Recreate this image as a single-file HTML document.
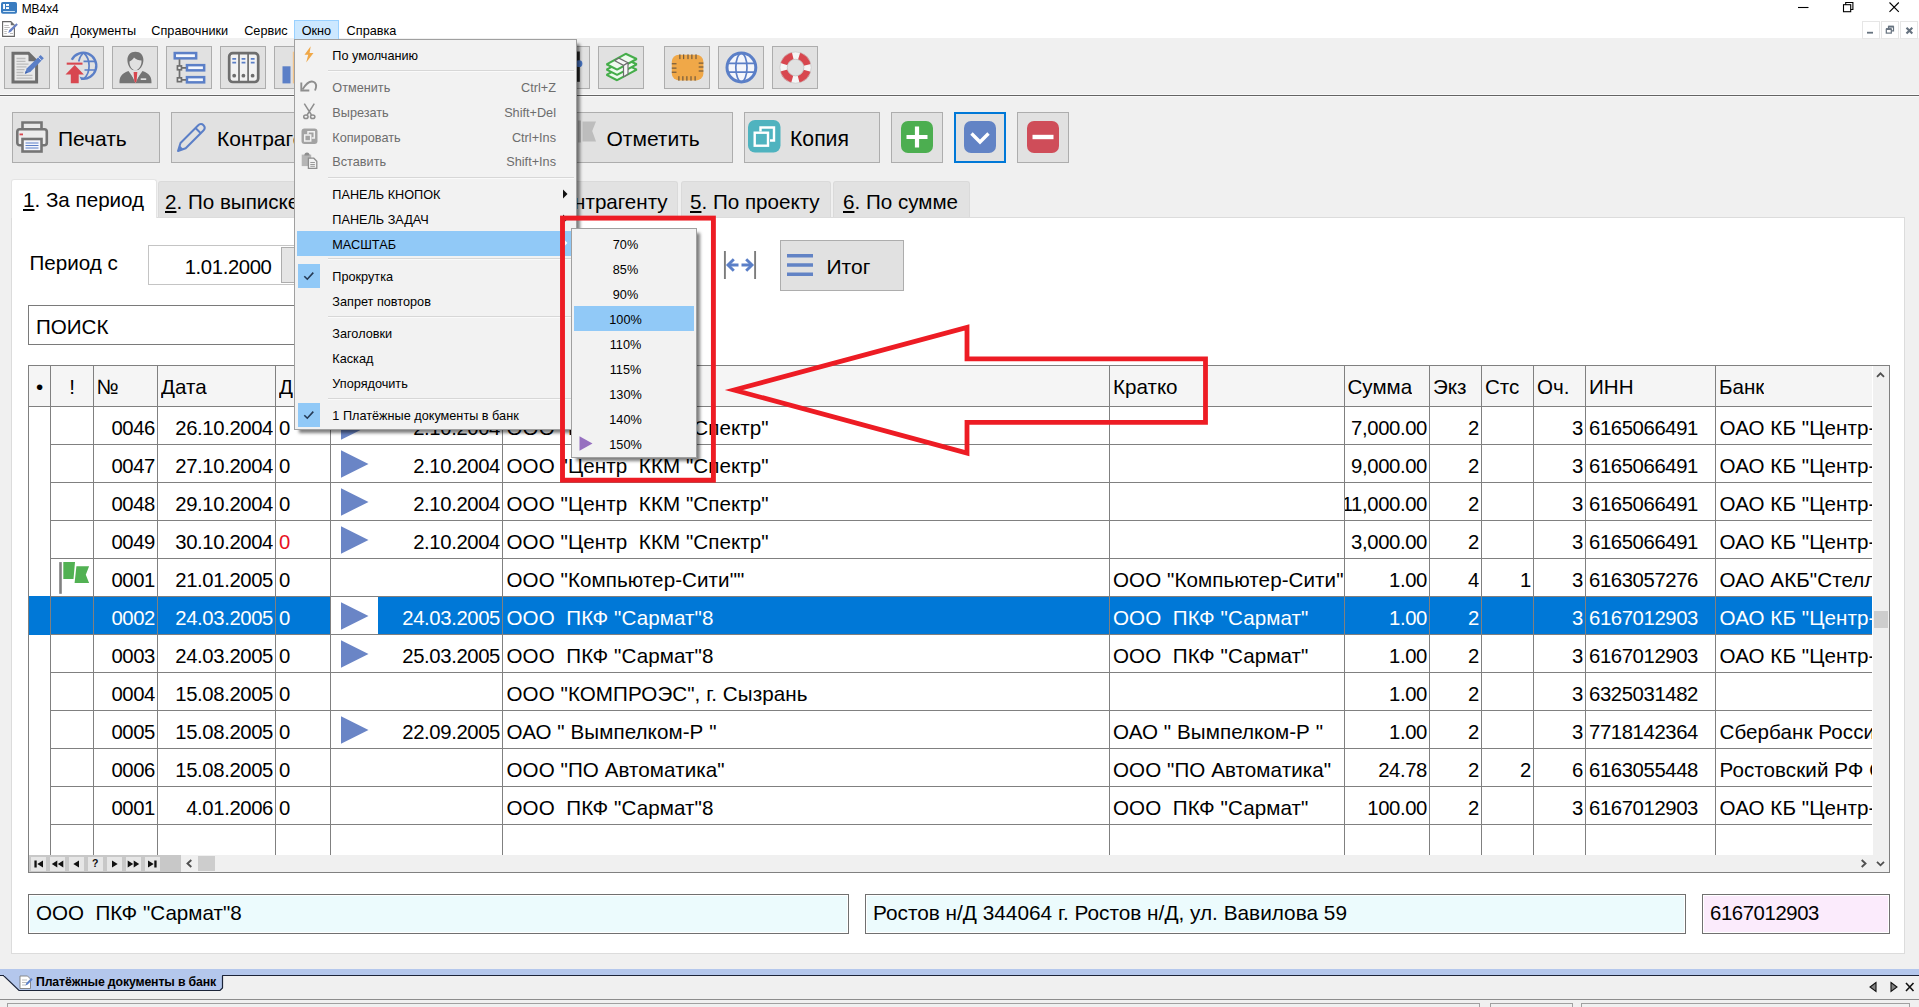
<!DOCTYPE html>
<html lang="ru"><head><meta charset="utf-8"><title>МВ4х4</title>
<style>
html,body{margin:0;padding:0;}
body{width:1919px;height:1007px;overflow:hidden;background:#f0f0f0;font-family:"Liberation Sans",sans-serif;color:#000;}
#app{position:relative;width:1919px;height:1007px;overflow:hidden;background:#f0f0f0;}
.abs{position:absolute;}
.t{position:absolute;white-space:pre;line-height:1;}
.titlebar{position:absolute;left:0;top:0;width:1919px;height:38px;background:#fff;}
.m12{font-size:12.7px;}
.tbtn{position:absolute;width:44px;height:41px;top:46px;background:#e1e1e1;border:1px solid #adadad;}
.tbtn svg{position:absolute;left:4.500px;top:3.600px;overflow:visible;}
.bbtn{position:absolute;top:112px;height:49px;background:#e1e1e1;border:1px solid #adadad;}
.big{font-size:20.6px;}
.tab{position:absolute;top:181px;height:36px;background:#e2e2e2;border:1px solid #dadada;border-bottom:none;box-sizing:border-box;border-radius:3px 3px 0 0;}
.tab.act{top:179px;height:39px;background:#fff;border-color:#e4e4e4;z-index:2;}
.panel{position:absolute;left:11px;top:217px;width:1892px;height:735px;background:#fff;border:1px solid #dcdcdc;}
.inp{position:absolute;background:#fff;border:1px solid #7a7a7a;box-sizing:border-box;}
.vl{position:absolute;width:1px;background:#808080;}
.hl{position:absolute;height:1px;background:#808080;}
.c{position:absolute;white-space:pre;line-height:38px;height:38px;overflow:hidden;font-size:20.6px;}
.tx{letter-spacing:0.07px;}
.n{font-size:20.300px;letter-spacing:-0.380px;}
.r{text-align:right;}
.sel{color:#fff;}
.menu{position:absolute;background:#f2f2f2;border:1px solid #a0a0a0;box-shadow:4px 4px 3px -1px rgba(0,0,0,0.5);box-sizing:border-box;}
.mi{position:absolute;left:37.300px;font-size:12.7px;white-space:pre;line-height:1;}
.dis{color:#6d6d6d;}
.sc{position:absolute;font-size:12.7px;white-space:pre;line-height:1;color:#6d6d6d;text-align:right;}
.msep{position:absolute;left:33px;right:2px;height:1px;background:#d7d7d7;border-bottom:1px solid #fafafa;}
.chk{position:absolute;left:3px;width:22px;height:24px;background:#91c9f7;}

</style></head>
<body>
<div id="app">
<div class="titlebar"></div>
<svg class="abs" style="left:1px;top:2px" width="17" height="13" viewBox="0 0 17 13"><rect x="0" y="0" width="16" height="11.800" rx="1.800" fill="#3a7cc0"/><rect x="2.100" y="2" width="1.900" height="5" fill="#fff"/><rect x="5" y="2" width="3" height="1.900" fill="#fff"/><rect x="5" y="5.100" width="3" height="1.900" fill="#fff"/><rect x="2.100" y="9" width="11.800" height="1" fill="#cfe6f8"/></svg>
<span class="t" style="left:21.700px;top:3.600px;font-size:11.900px">МВ4х4</span>
<svg class="abs" style="left:1790px;top:0" width="125" height="16" viewBox="0 0 125 16"><g stroke="#000" stroke-width="1.1" fill="none"><path d="M8 7.5h10.5"/><rect x="53.500" y="4.700" width="7.200" height="7"/><path d="M55.700 4.700v-2.200h7.200v7h-2.200"/><path d="M99.500 2.500l9.300 9.300M108.800 2.500l-9.300 9.300"/></g></svg>
<div class="abs" style="left:1862px;top:21px;width:16px;height:16px;background:#fff;border:1px solid #e6e6e6"></div>
<div class="abs" style="left:1881px;top:21px;width:16px;height:16px;background:#fff;border:1px solid #e6e6e6"></div>
<div class="abs" style="left:1900px;top:21px;width:16px;height:16px;background:#fff;border:1px solid #e6e6e6"></div>
<svg class="abs" style="left:1862px;top:21px" width="57" height="18" viewBox="0 0 57 18"><g fill="none" stroke="#66727f" stroke-width="1.5"><path d="M5 11.7h6" stroke-width="1.8"/><rect x="24.3" y="8.3" width="5" height="3.8" stroke-width="1.2"/><path d="M26.5 8v-2.2h5v4h-2" stroke-width="1.2"/><path d="M26.2 5.4h5.6" stroke-width="1.6"/><path d="M24 7.9h5.6" stroke-width="1.6"/><path d="M44.500 6.700l5.800 5.800M50.300 6.700l-5.800 5.800" stroke-width="2.100"/></g></svg>
<svg class="abs" style="left:2px;top:21px" width="17" height="17" viewBox="0 0 17 17"><path d="M0.600 0.600h8.200l3.600 3.600v11.200H0.600z" fill="#fff" stroke="#666" stroke-width="1.100"/><path d="M8.800 0.600v3.600h3.600z" fill="#707070"/><path d="M2.300 4.500h4.500M2.300 6.500h5.500M2.300 8.500h3.500M2.300 10.500h2.500M2.300 12.500h2.500M8 12.500h3" stroke="#b5b5b5" stroke-width="0.900"/><path d="M6.200 12l1-3 7.300-6.800 1.300 1.500-6.800 7z" fill="#6a82c4"/></svg>
<div class="abs" style="left:294px;top:20px;width:43px;height:19px;background:#cce8ff;border:1px solid #99d1ff;box-sizing:content-box;width:43px;height:18px"></div>
<span class="t m12" style="left:27.5px;top:24.700px">Файл</span>
<span class="t m12" style="left:70.8px;top:24.700px">Документы</span>
<span class="t m12" style="left:151.3px;top:24.700px">Справочники</span>
<span class="t m12" style="left:244.2px;top:24.700px">Сервис</span>
<span class="t m12" style="left:301.7px;top:24.700px">Окно</span>
<span class="t m12" style="left:346.6px;top:24.700px">Справка</span>
<div class="abs" style="left:0;top:94px;width:1919px;height:3px;background:#f9f9f9"></div>
<div class="abs" style="left:0;top:95px;width:1919px;height:1px;background:#646464"></div>
<div class="tbtn" style="left:4px"><svg width="34" height="34" viewBox="0 0 34 34"><path d="M3 2.200H18.500L26.600 10.300V30.900H3z" fill="#e9e9e9" stroke="#6e6e6e" stroke-width="3" stroke-linejoin="miter"/><path d="M18.500 1.500v8.800h8.800z" fill="#6e6e6e"/><path d="M6.500 7.500h9M6.500 10.300h9M6.500 13.100h12M6.500 15.900h10M6.500 18.700h8M6.500 21.500h7M6.500 24.300h16M6.500 27.100h16" stroke="#bcbcbc" stroke-width="1.300"/><path d="M14.900 22.700l1.700-5.300L30.600 4l3.200 3.300-13.500 13.700z" fill="#5b7fc7"/><path d="M28.300 6.200l3.300 3.300" stroke="#dfe7f7" stroke-width="0.900"/><path d="M14.900 22.700l.9-2.800 1.900 1.900z" fill="#3f61ab"/></svg></div>
<div class="tbtn" style="left:58px"><svg width="34" height="34" viewBox="0 0 34 34"><g fill="none" stroke="#5b7fc7"><path d="M7.800 8.700A13 13 0 1 1 17.270 27.640" stroke-width="2.400"/><path d="M19.300 2c-2.500 2.300-4 5.200-4.600 8.500" stroke-width="1.600"/><path d="M19.800 2c7 6 7 19.500 0.300 25.500" stroke-width="1.700"/><path d="M19.500 10.300h12M20.500 19h11.200" stroke-width="1.700"/></g><path d="M2.700 11.600h15.800v2.100H2.700z" fill="#d8474f"/><path d="M10.700 14.100L19.900 23.600H14.700V32.300H6.800V23.600H1.500z" fill="#d8474f"/><path d="M15.500 25.500l3.800 1.600-2 2.200z" fill="#5b7fc7"/></svg></div>
<div class="tbtn" style="left:112px"><svg width="34" height="34" viewBox="0 0 34 34"><path d="M17.400 0.700c5 0 8 3.400 8 8.200 0 5.500-3.500 10.800-8 10.800s-8-5.300-8-10.800c0-4.800 3-8.200 8-8.200z" fill="#747474"/><path d="M11.500 10.500c2-1 3.500-2.300 4.500-4 2 2 4.500 3 7.500 3 .3 4.500-2.500 9.700-6.100 9.700s-6.200-4.500-5.900-8.700z" fill="#e1e1e1"/><path d="M1.500 32.300c-.3-6 1.500-9.500 9-12.300l7 10 7-10c7.500 2.800 9.300 6.300 9 12.300z" fill="#747474"/><path d="M11.800 19.300l5.700 13 5.700-13z" fill="#e1e1e1"/><path d="M15.600 20.900h3.700l-.7 9-1.100 2-1.200-2z" fill="#d8474f"/><rect x="22.700" y="27.300" width="5.500" height="1.700" fill="#e1e1e1"/></svg></div>
<div class="tbtn" style="left:166px"><svg width="34" height="34" viewBox="0 0 34 34"><g fill="#f4f7fd" stroke="#5b7fc7" stroke-width="2.500"><rect x="2.750" y="2.050" width="21.400" height="5.300"/><rect x="14.950" y="14.150" width="17.200" height="5.200"/><rect x="14.950" y="26.150" width="17.200" height="5.200"/></g><path d="M7.500 8.300v18M10 16.800h4M10 28.800h4" stroke="#6e6e6e" stroke-width="1.700" fill="none"/><rect x="5.450" y="14.950" width="4" height="3.800" fill="#f2f2f2" stroke="#6e6e6e" stroke-width="1.700"/><rect x="5.450" y="26.850" width="4" height="3.800" fill="#f2f2f2" stroke="#6e6e6e" stroke-width="1.700"/></svg></div>
<div class="tbtn" style="left:220px"><svg width="34" height="34" viewBox="0 0 34 34"><rect x="3.200" y="2.100" width="29" height="28.900" rx="3.500" fill="#f2f2f2" stroke="#6e6e6e" stroke-width="2.700"/><path d="M13 2v29M22.100 2v29" stroke="#6e6e6e" stroke-width="1.700"/><g stroke="#5b7fc7" stroke-width="1.700"><path d="M6.300 7.800h3.800M6.300 11.700h3.800M15.600 7.800h3.800M15.600 11.700h3.800M24.800 7.800h3.800M24.800 11.700h3.800"/></g><g fill="#6e6e6e"><circle cx="8.200" cy="24.700" r="1.900"/><circle cx="17.400" cy="24.700" r="1.900"/><circle cx="26.600" cy="24.700" r="1.900"/></g></svg></div>
<div class="tbtn" style="left:274px"><svg width="34" height="34" viewBox="0 0 34 34"><rect x="2.500" y="15.300" width="8" height="17.100" fill="#5b7fc7"/><rect x="12.800" y="0.700" width="8" height="31.700" fill="#f3c48a"/><rect x="23" y="9" width="8" height="23.400" fill="#d8474f"/></svg></div>
<div class="tbtn" style="left:328px"><svg width="34" height="34" viewBox="0 0 34 34"></svg></div>
<div class="tbtn" style="left:382px"><svg width="34" height="34" viewBox="0 0 34 34"></svg></div>
<div class="tbtn" style="left:436px"><svg width="34" height="34" viewBox="0 0 34 34"></svg></div>
<div class="tbtn" style="left:490px"><svg width="34" height="34" viewBox="0 0 34 34"></svg></div>
<div class="tbtn" style="left:544px"><svg width="34" height="34" viewBox="0 0 34 34"><rect x="26.800" y="0.500" width="3" height="30.300" fill="#2a2a2a"/><circle cx="29" cy="12.700" r="3.400" fill="#4a78c8"/></svg></div>
<div class="tbtn" style="left:598px"><svg width="34" height="34" viewBox="0 0 34 34"><g stroke="#45ad4a" stroke-width="2.100" stroke-linejoin="bevel" fill="#eefaee"><path d="M2.600 23.9L21.700 13.4L32.700 18.6L13.100 29.2z"/><path d="M2.600 18.6L21.700 8.1L32.700 13.3L13.100 23.9z"/><path d="M2.600 13.3L21.700 2.8L32.700 8.0L13.100 18.6z"/></g><path d="M10.800 9.800L14.900 7.100L24 11.700L19.500 14.400z" fill="#f6f6f6" stroke="#6e6e6e" stroke-width="1.200" stroke-linejoin="round"/><path d="M19.500 14.400L24 11.700V23.100L19.500 25.800z" fill="#f6f6f6" stroke="#6e6e6e" stroke-width="1.200" stroke-linejoin="round"/></svg></div>
<div class="tbtn" style="left:664px"><svg width="34" height="34" viewBox="0 0 34 34"><rect x="1.800" y="3.800" width="31.600" height="25.600" rx="7" fill="#f0a848"/><g stroke="#5a4a3a" stroke-width="1"><path d="M9.900 3.400v4.700M13.700 3.400v4.700M18 3.400v4.700M21.900 3.400v4.700M26 3.400v4.700M8.900 25.200v4.500M12.900 25.200v4.500M16.900 25.200v4.500M21 25.200v4.500M25.100 25.200v4.500M1.800 12.800h4.700M1.800 17.100h4.700M1.800 21.200h4.700M28.700 12.100h4.700M28.700 16h4.700M28.700 20h4.700"/></g></svg></div>
<div class="tbtn" style="left:718px"><svg width="34" height="34" viewBox="0 0 34 34"><circle cx="17.400" cy="16.500" r="14.400" fill="#f4f6fb" stroke="#5b7fc7" stroke-width="3"/><g fill="none" stroke="#5b7fc7" stroke-width="1.700"><ellipse cx="17.400" cy="16.500" rx="5.600" ry="14.200"/><path d="M3.500 12.300h27.800M3.500 21.200h27.800"/></g></svg></div>
<div class="tbtn" style="left:772px"><svg width="34" height="34" viewBox="0 0 34 34"><circle cx="17.550" cy="16.550" r="12" fill="none" stroke="#f5f5f5" stroke-width="7.500"/><circle cx="17.550" cy="16.550" r="12" fill="none" stroke="#d8474f" stroke-width="7.500" stroke-dasharray="12.360 6.490" stroke-dashoffset="15.600"/><circle cx="17.550" cy="16.550" r="15.700" fill="none" stroke="#c4c4c4" stroke-width="0.700"/><circle cx="17.550" cy="16.550" r="8.300" fill="none" stroke="#c4c4c4" stroke-width="0.900"/></svg></div>
<div class="bbtn" style="left:12px;width:146px;"></div>
<div class="bbtn" style="left:171px;width:198px;"></div>
<div class="bbtn" style="left:382px;width:180px;"></div>
<div class="bbtn" style="left:575px;width:156px;"></div>
<div class="bbtn" style="left:744px;width:134px;"></div>
<div class="bbtn" style="left:891px;width:50px;"></div>
<div class="abs" style="left:954px;top:112px;width:48px;height:47px;background:#e1e1e1;border:2px solid #0078d7"></div>
<div class="bbtn" style="left:1017px;width:50px;"></div>
<svg class="abs" style="left:15px;top:120px" width="34" height="34" viewBox="0 0 34 34"><path d="M7.500 9V2.500h19V9" fill="#e9e9e9" stroke="#757575" stroke-width="2.600"/><rect x="2.300" y="9.300" width="29.500" height="16" rx="2.500" fill="#ededed" stroke="#757575" stroke-width="2.600"/><rect x="4.500" y="13.500" width="3.500" height="1.800" fill="#d8474f"/><rect x="7.500" y="19" width="19" height="12.500" fill="#f4f6fb" stroke="#757575" stroke-width="2.600"/><path d="M10.500 23h13M10.500 25.500h13M10.500 28h13" stroke="#5b7fc7" stroke-width="1.100"/></svg>
<span class="t big" style="left:58px;top:127.800px;font-size:21px">Печать</span>
<svg class="abs" style="left:175px;top:120px" width="34" height="34" viewBox="0 0 34 34"><g fill="none" stroke="#5b7fc7" stroke-width="2" stroke-linejoin="round"><path d="M3 31l2.500-8L23 5.500c1.800-1.800 4-1.800 5.500-.3s1.500 3.700-.3 5.500L10.700 28.200z"/><path d="M20.500 8l5.500 5.500"/></g><path d="M3 31l1.800-5.500 3.700 3.700z" fill="#5b7fc7"/></svg>
<span class="t big" style="left:217px;top:127.800px;font-size:21px">Контрагент</span>
<span class="t big" style="left:428px;top:128px">Проект</span>
<svg class="abs" style="left:574px;top:120px" width="28" height="28" viewBox="0 0 28 28"><path d="M5.500 0.500v22" stroke="#b4b4b4" stroke-width="3"/><path d="M8.500 1.500h13.500l-3.800 9.500 3.800 10.500H8.500z" fill="#bdbdbd"/></svg>
<span class="t big" style="left:606.500px;top:127.800px;font-size:21px">Отметить</span>
<svg class="abs" style="left:748px;top:120px" width="33" height="33" viewBox="0 0 33 33"><rect x="0" y="0" width="32.500" height="32.500" rx="7" fill="#4fb3bf"/><g fill="none" stroke="#fff" stroke-width="2.400"><path d="M12.500 11.500V7.500h13.500v13h-4"/><rect x="6.700" y="12.700" width="13.300" height="13"/></g></svg>
<span class="t big" style="left:790px;top:127.800px;font-size:21.200px">Копия</span>
<svg class="abs" style="left:901px;top:121px" width="32" height="32" viewBox="0 0 32 32"><rect width="32" height="32" rx="7" fill="#4cae50"/><path d="M16 5.500v21M5.500 16h21" stroke="#fff" stroke-width="4.200"/></svg>
<svg class="abs" style="left:964px;top:121px" width="32" height="32" viewBox="0 0 32 32"><rect width="32" height="32" rx="7" fill="#6283c5"/><path d="M7.500 12.500l8.500 8.500 8.500-8.500" stroke="#fff" stroke-width="3.400" fill="none"/></svg>
<svg class="abs" style="left:1027px;top:121px" width="32" height="32" viewBox="0 0 32 32"><rect width="32" height="32" rx="7" fill="#cf4d59"/><path d="M5.500 16h21" stroke="#fff" stroke-width="4.400"/></svg>
<div class="panel"></div>
<div class="tab act" style="left:11px;width:146px"></div>
<span class="t big" style="left:23px;top:189.5px;z-index:3"><u>1</u>. За период</span>
<div class="tab" style="left:158px;width:148px"></div>
<span class="t big" style="left:165px;top:192.1px;z-index:3"><u>2</u>. По выписке</span>
<div class="tab" style="left:308px;width:172px"></div>
<span class="t big" style="left:318px;top:192.1px;z-index:3"><u>3</u>. По номеру</span>
<div class="tab" style="left:482px;width:196px"></div>
<span class="t big" style="left:498.5px;top:192.1px;z-index:3"><u>4</u>. По контрагенту</span>
<div class="tab" style="left:681px;width:150px"></div>
<span class="t big" style="left:690px;top:192.1px;z-index:3"><u>5</u>. По проекту</span>
<div class="tab" style="left:833px;width:137px"></div>
<span class="t big" style="left:843px;top:192.1px;z-index:3"><u>6</u>. По сумме</span>
<span class="t big" style="left:29.5px;top:253px">Период с</span>
<div class="inp" style="left:148px;top:245px;width:150px;height:40px;border-color:#c4c4c4"></div>
<span class="t n" style="left:150px;width:121.500px;top:257.100px;text-align:right;font-size:20.300px">1.01.2000</span>
<div class="abs" style="left:281px;top:247px;width:16px;height:36px;background:#e5e5e5;border:1px solid #adadad;box-sizing:border-box"></div>
<svg class="abs" style="left:723px;top:250px" width="34" height="30" viewBox="0 0 34 30"><path d="M1.900 1v28M32.100 1v28" stroke="#7c7c7c" stroke-width="1.900"/><g fill="none" stroke="#5b7fc7" stroke-width="2.900"><path d="M6 15h9.500M18.500 15H28"/><path d="M10.800 9.200L5 15l5.800 5.800M23.200 9.200L29 15l-5.800 5.800" stroke-linejoin="miter"/></g></svg>
<div class="abs" style="left:780px;top:240px;width:122px;height:49px;background:#e1e1e1;border:1px solid #adadad"></div>
<svg class="abs" style="left:786px;top:253.100px" width="28" height="24" viewBox="0 0 28 24"><path d="M1 2.700h26M1 12h26M1 21.300h26" stroke="#6283c5" stroke-width="3.400"/></svg>
<span class="t big" style="left:826.500px;top:256px;font-size:21px">Итог</span>
<div class="inp" style="left:28px;top:305px;width:530px;height:40px;border-color:#7a7a7a"></div>
<span class="t big" style="left:36px;top:316.500px">ПОИСК</span>
<div class="abs" style="left:28px;top:365px;width:1860px;height:506px;background:#fff;border:1px solid #808080"></div>
<div class="abs" style="left:29px;top:366px;width:1843px;height:40px;background:#f5f5f5"></div>
<div class="abs" style="left:29px;top:596px;width:1843px;height:39px;background:#0078d7"></div>
<div class="abs" style="left:331px;top:597px;width:47px;height:37px;background:#fff"></div>
<div class="vl" style="left:50px;top:366px;height:489px"></div>
<div class="vl" style="left:93px;top:366px;height:489px"></div>
<div class="vl" style="left:157px;top:366px;height:489px"></div>
<div class="vl" style="left:275px;top:366px;height:489px"></div>
<div class="vl" style="left:330px;top:366px;height:489px"></div>
<div class="vl" style="left:502px;top:366px;height:489px"></div>
<div class="vl" style="left:1109px;top:366px;height:489px"></div>
<div class="vl" style="left:1344px;top:366px;height:489px"></div>
<div class="vl" style="left:1429px;top:366px;height:489px"></div>
<div class="vl" style="left:1481px;top:366px;height:489px"></div>
<div class="vl" style="left:1533px;top:366px;height:489px"></div>
<div class="vl" style="left:1585px;top:366px;height:489px"></div>
<div class="vl" style="left:1715px;top:366px;height:489px"></div>
<div class="hl" style="left:29px;top:406px;width:1843px"></div>
<div class="hl" style="left:50px;top:444px;width:1822px"></div>
<div class="hl" style="left:50px;top:482px;width:1822px"></div>
<div class="hl" style="left:50px;top:520px;width:1822px"></div>
<div class="hl" style="left:50px;top:558px;width:1822px"></div>
<div class="hl" style="left:50px;top:596px;width:1822px"></div>
<div class="hl" style="left:50px;top:634px;width:1822px"></div>
<div class="hl" style="left:50px;top:672px;width:1822px"></div>
<div class="hl" style="left:50px;top:710px;width:1822px"></div>
<div class="hl" style="left:50px;top:748px;width:1822px"></div>
<div class="hl" style="left:50px;top:786px;width:1822px"></div>
<div class="hl" style="left:50px;top:824px;width:1822px"></div>
<span class="c" style="left:29px;top:366px;height:40px;line-height:42px;width:21px;text-align:center;">•</span>
<span class="c" style="left:51px;top:366px;height:40px;line-height:42px;width:42px;text-align:center;">!</span>
<span class="c" style="left:96.5px;top:366px;height:40px;line-height:42px;">№</span>
<span class="c" style="left:161px;top:366px;height:40px;line-height:42px;">Дата</span>
<span class="c" style="left:279px;top:366px;height:40px;line-height:42px;">Д</span>
<span class="c" style="left:334px;top:366px;height:40px;line-height:42px;">Выписка</span>
<span class="c" style="left:506.5px;top:366px;height:40px;line-height:42px;">Контрагент</span>
<span class="c" style="left:1113px;top:366px;height:40px;line-height:42px;">Кратко</span>
<span class="c" style="left:1347.5px;top:366px;height:40px;line-height:42px;">Сумма</span>
<span class="c" style="left:1433px;top:366px;height:40px;line-height:42px;">Экз</span>
<span class="c" style="left:1485px;top:366px;height:40px;line-height:42px;">Стс</span>
<span class="c" style="left:1537px;top:366px;height:40px;line-height:42px;">Оч.</span>
<span class="c" style="left:1589px;top:366px;height:40px;line-height:42px;">ИНН</span>
<span class="c" style="left:1719px;top:366px;height:40px;line-height:42px;">Банк</span>
<span class="c n" style="left:94px;width:61px;top:408.8px;text-align:right;direction:rtl;"><bdi style="direction:ltr;unicode-bidi:isolate">0046</bdi></span>
<span class="c n" style="left:158px;width:115px;top:408.8px;text-align:right;direction:rtl;"><bdi style="direction:ltr;unicode-bidi:isolate">26.10.2004</bdi></span>
<span class="c n" style="left:279px;width:51px;top:408.8px;">0</span>
<svg class="abs" style="left:341px;top:412px" width="28" height="28" viewBox="0 0 28 28"><path d="M0 0.300L27.500 14 0 27.700z" fill="#6a85c6"/></svg>
<span class="c n" style="left:379px;width:121px;top:408.8px;text-align:right;direction:rtl;"><bdi style="direction:ltr;unicode-bidi:isolate">2.10.2004</bdi></span>
<span class="c tx" style="left:506.5px;width:602.5px;top:408.8px;">ООО "Центр  ККМ "Спектр"</span>
<span class="c n" style="left:1345px;width:82px;top:408.8px;text-align:right;direction:rtl;"><bdi style="direction:ltr;unicode-bidi:isolate">7,000.00</bdi></span>
<span class="c n" style="left:1430px;width:49px;top:408.8px;text-align:right;direction:rtl;"><bdi style="direction:ltr;unicode-bidi:isolate">2</bdi></span>
<span class="c n" style="left:1534px;width:49px;top:408.8px;text-align:right;direction:rtl;"><bdi style="direction:ltr;unicode-bidi:isolate">3</bdi></span>
<span class="c n" style="left:1589px;width:126px;top:408.8px;">6165066491</span>
<span class="c tx" style="left:1719.5px;width:152.5px;top:408.8px;">ОАО КБ "Центр-Инвест"</span>
<span class="c n" style="left:94px;width:61px;top:446.8px;text-align:right;direction:rtl;"><bdi style="direction:ltr;unicode-bidi:isolate">0047</bdi></span>
<span class="c n" style="left:158px;width:115px;top:446.8px;text-align:right;direction:rtl;"><bdi style="direction:ltr;unicode-bidi:isolate">27.10.2004</bdi></span>
<span class="c n" style="left:279px;width:51px;top:446.8px;">0</span>
<svg class="abs" style="left:341px;top:450px" width="28" height="28" viewBox="0 0 28 28"><path d="M0 0.300L27.500 14 0 27.700z" fill="#6a85c6"/></svg>
<span class="c n" style="left:379px;width:121px;top:446.8px;text-align:right;direction:rtl;"><bdi style="direction:ltr;unicode-bidi:isolate">2.10.2004</bdi></span>
<span class="c tx" style="left:506.5px;width:602.5px;top:446.8px;">ООО "Центр  ККМ "Спектр"</span>
<span class="c n" style="left:1345px;width:82px;top:446.8px;text-align:right;direction:rtl;"><bdi style="direction:ltr;unicode-bidi:isolate">9,000.00</bdi></span>
<span class="c n" style="left:1430px;width:49px;top:446.8px;text-align:right;direction:rtl;"><bdi style="direction:ltr;unicode-bidi:isolate">2</bdi></span>
<span class="c n" style="left:1534px;width:49px;top:446.8px;text-align:right;direction:rtl;"><bdi style="direction:ltr;unicode-bidi:isolate">3</bdi></span>
<span class="c n" style="left:1589px;width:126px;top:446.8px;">6165066491</span>
<span class="c tx" style="left:1719.5px;width:152.5px;top:446.8px;">ОАО КБ "Центр-Инвест"</span>
<span class="c n" style="left:94px;width:61px;top:484.8px;text-align:right;direction:rtl;"><bdi style="direction:ltr;unicode-bidi:isolate">0048</bdi></span>
<span class="c n" style="left:158px;width:115px;top:484.8px;text-align:right;direction:rtl;"><bdi style="direction:ltr;unicode-bidi:isolate">29.10.2004</bdi></span>
<span class="c n" style="left:279px;width:51px;top:484.8px;">0</span>
<svg class="abs" style="left:341px;top:488px" width="28" height="28" viewBox="0 0 28 28"><path d="M0 0.300L27.500 14 0 27.700z" fill="#6a85c6"/></svg>
<span class="c n" style="left:379px;width:121px;top:484.8px;text-align:right;direction:rtl;"><bdi style="direction:ltr;unicode-bidi:isolate">2.10.2004</bdi></span>
<span class="c tx" style="left:506.5px;width:602.5px;top:484.8px;">ООО "Центр  ККМ "Спектр"</span>
<span class="c n" style="left:1345px;width:82px;top:484.8px;text-align:right;direction:rtl;"><bdi style="direction:ltr;unicode-bidi:isolate">11,000.00</bdi></span>
<span class="c n" style="left:1430px;width:49px;top:484.8px;text-align:right;direction:rtl;"><bdi style="direction:ltr;unicode-bidi:isolate">2</bdi></span>
<span class="c n" style="left:1534px;width:49px;top:484.8px;text-align:right;direction:rtl;"><bdi style="direction:ltr;unicode-bidi:isolate">3</bdi></span>
<span class="c n" style="left:1589px;width:126px;top:484.8px;">6165066491</span>
<span class="c tx" style="left:1719.5px;width:152.5px;top:484.8px;">ОАО КБ "Центр-Инвест"</span>
<span class="c n" style="left:94px;width:61px;top:522.8px;text-align:right;direction:rtl;"><bdi style="direction:ltr;unicode-bidi:isolate">0049</bdi></span>
<span class="c n" style="left:158px;width:115px;top:522.8px;text-align:right;direction:rtl;"><bdi style="direction:ltr;unicode-bidi:isolate">30.10.2004</bdi></span>
<span class="c n" style="left:279px;width:51px;top:522.8px;color:#e81123;">0</span>
<svg class="abs" style="left:341px;top:526px" width="28" height="28" viewBox="0 0 28 28"><path d="M0 0.300L27.500 14 0 27.700z" fill="#6a85c6"/></svg>
<span class="c n" style="left:379px;width:121px;top:522.8px;text-align:right;direction:rtl;"><bdi style="direction:ltr;unicode-bidi:isolate">2.10.2004</bdi></span>
<span class="c tx" style="left:506.5px;width:602.5px;top:522.8px;">ООО "Центр  ККМ "Спектр"</span>
<span class="c n" style="left:1345px;width:82px;top:522.8px;text-align:right;direction:rtl;"><bdi style="direction:ltr;unicode-bidi:isolate">3,000.00</bdi></span>
<span class="c n" style="left:1430px;width:49px;top:522.8px;text-align:right;direction:rtl;"><bdi style="direction:ltr;unicode-bidi:isolate">2</bdi></span>
<span class="c n" style="left:1534px;width:49px;top:522.8px;text-align:right;direction:rtl;"><bdi style="direction:ltr;unicode-bidi:isolate">3</bdi></span>
<span class="c n" style="left:1589px;width:126px;top:522.8px;">6165066491</span>
<span class="c tx" style="left:1719.5px;width:152.5px;top:522.8px;">ОАО КБ "Центр-Инвест"</span>
<span class="c n" style="left:94px;width:61px;top:560.8px;text-align:right;direction:rtl;"><bdi style="direction:ltr;unicode-bidi:isolate">0001</bdi></span>
<span class="c n" style="left:158px;width:115px;top:560.8px;text-align:right;direction:rtl;"><bdi style="direction:ltr;unicode-bidi:isolate">21.01.2005</bdi></span>
<span class="c n" style="left:279px;width:51px;top:560.8px;">0</span>
<span class="c tx" style="left:506.5px;width:602.5px;top:560.8px;">ООО "Компьютер-Сити""</span>
<span class="c tx" style="left:1113px;width:231px;top:560.8px;">ООО "Компьютер-Сити""</span>
<span class="c n" style="left:1345px;width:82px;top:560.8px;text-align:right;direction:rtl;"><bdi style="direction:ltr;unicode-bidi:isolate">1.00</bdi></span>
<span class="c n" style="left:1430px;width:49px;top:560.8px;text-align:right;direction:rtl;"><bdi style="direction:ltr;unicode-bidi:isolate">4</bdi></span>
<span class="c n" style="left:1482px;width:49px;top:560.8px;text-align:right;direction:rtl;"><bdi style="direction:ltr;unicode-bidi:isolate">1</bdi></span>
<span class="c n" style="left:1534px;width:49px;top:560.8px;text-align:right;direction:rtl;"><bdi style="direction:ltr;unicode-bidi:isolate">3</bdi></span>
<span class="c n" style="left:1589px;width:126px;top:560.8px;">6163057276</span>
<span class="c tx" style="left:1719.5px;width:152.5px;top:560.8px;">ОАО АКБ"Стелла-Банк"</span>
<span class="c n sel" style="left:94px;width:61px;top:598.8px;text-align:right;direction:rtl;"><bdi style="direction:ltr;unicode-bidi:isolate">0002</bdi></span>
<span class="c n sel" style="left:158px;width:115px;top:598.8px;text-align:right;direction:rtl;"><bdi style="direction:ltr;unicode-bidi:isolate">24.03.2005</bdi></span>
<span class="c n sel" style="left:279px;width:51px;top:598.8px;">0</span>
<svg class="abs" style="left:341px;top:602px" width="28" height="28" viewBox="0 0 28 28"><path d="M0 0.300L27.500 14 0 27.700z" fill="#6a85c6"/></svg>
<span class="c n sel" style="left:379px;width:121px;top:598.8px;text-align:right;direction:rtl;"><bdi style="direction:ltr;unicode-bidi:isolate">24.03.2005</bdi></span>
<span class="c tx sel" style="left:506.5px;width:602.5px;top:598.8px;">ООО  ПКФ "Сармат"8</span>
<span class="c tx sel" style="left:1113px;width:231px;top:598.8px;">ООО  ПКФ "Сармат"</span>
<span class="c n sel" style="left:1345px;width:82px;top:598.8px;text-align:right;direction:rtl;"><bdi style="direction:ltr;unicode-bidi:isolate">1.00</bdi></span>
<span class="c n sel" style="left:1430px;width:49px;top:598.8px;text-align:right;direction:rtl;"><bdi style="direction:ltr;unicode-bidi:isolate">2</bdi></span>
<span class="c n sel" style="left:1534px;width:49px;top:598.8px;text-align:right;direction:rtl;"><bdi style="direction:ltr;unicode-bidi:isolate">3</bdi></span>
<span class="c n sel" style="left:1589px;width:126px;top:598.8px;">6167012903</span>
<span class="c tx sel" style="left:1719.5px;width:152.5px;top:598.8px;">ОАО КБ "Центр-Инвест"</span>
<span class="c n" style="left:94px;width:61px;top:636.8px;text-align:right;direction:rtl;"><bdi style="direction:ltr;unicode-bidi:isolate">0003</bdi></span>
<span class="c n" style="left:158px;width:115px;top:636.8px;text-align:right;direction:rtl;"><bdi style="direction:ltr;unicode-bidi:isolate">24.03.2005</bdi></span>
<span class="c n" style="left:279px;width:51px;top:636.8px;">0</span>
<svg class="abs" style="left:341px;top:640px" width="28" height="28" viewBox="0 0 28 28"><path d="M0 0.300L27.500 14 0 27.700z" fill="#6a85c6"/></svg>
<span class="c n" style="left:379px;width:121px;top:636.8px;text-align:right;direction:rtl;"><bdi style="direction:ltr;unicode-bidi:isolate">25.03.2005</bdi></span>
<span class="c tx" style="left:506.5px;width:602.5px;top:636.8px;">ООО  ПКФ "Сармат"8</span>
<span class="c tx" style="left:1113px;width:231px;top:636.8px;">ООО  ПКФ "Сармат"</span>
<span class="c n" style="left:1345px;width:82px;top:636.8px;text-align:right;direction:rtl;"><bdi style="direction:ltr;unicode-bidi:isolate">1.00</bdi></span>
<span class="c n" style="left:1430px;width:49px;top:636.8px;text-align:right;direction:rtl;"><bdi style="direction:ltr;unicode-bidi:isolate">2</bdi></span>
<span class="c n" style="left:1534px;width:49px;top:636.8px;text-align:right;direction:rtl;"><bdi style="direction:ltr;unicode-bidi:isolate">3</bdi></span>
<span class="c n" style="left:1589px;width:126px;top:636.8px;">6167012903</span>
<span class="c tx" style="left:1719.5px;width:152.5px;top:636.8px;">ОАО КБ "Центр-Инвест"</span>
<span class="c n" style="left:94px;width:61px;top:674.8px;text-align:right;direction:rtl;"><bdi style="direction:ltr;unicode-bidi:isolate">0004</bdi></span>
<span class="c n" style="left:158px;width:115px;top:674.8px;text-align:right;direction:rtl;"><bdi style="direction:ltr;unicode-bidi:isolate">15.08.2005</bdi></span>
<span class="c n" style="left:279px;width:51px;top:674.8px;">0</span>
<span class="c tx" style="left:506.5px;width:602.5px;top:674.8px;">ООО "КОМПРОЭС", г. Сызрань</span>
<span class="c n" style="left:1345px;width:82px;top:674.8px;text-align:right;direction:rtl;"><bdi style="direction:ltr;unicode-bidi:isolate">1.00</bdi></span>
<span class="c n" style="left:1430px;width:49px;top:674.8px;text-align:right;direction:rtl;"><bdi style="direction:ltr;unicode-bidi:isolate">2</bdi></span>
<span class="c n" style="left:1534px;width:49px;top:674.8px;text-align:right;direction:rtl;"><bdi style="direction:ltr;unicode-bidi:isolate">3</bdi></span>
<span class="c n" style="left:1589px;width:126px;top:674.8px;">6325031482</span>
<span class="c n" style="left:94px;width:61px;top:712.8px;text-align:right;direction:rtl;"><bdi style="direction:ltr;unicode-bidi:isolate">0005</bdi></span>
<span class="c n" style="left:158px;width:115px;top:712.8px;text-align:right;direction:rtl;"><bdi style="direction:ltr;unicode-bidi:isolate">15.08.2005</bdi></span>
<span class="c n" style="left:279px;width:51px;top:712.8px;">0</span>
<svg class="abs" style="left:341px;top:716px" width="28" height="28" viewBox="0 0 28 28"><path d="M0 0.300L27.500 14 0 27.700z" fill="#6a85c6"/></svg>
<span class="c n" style="left:379px;width:121px;top:712.8px;text-align:right;direction:rtl;"><bdi style="direction:ltr;unicode-bidi:isolate">22.09.2005</bdi></span>
<span class="c tx" style="left:506.5px;width:602.5px;top:712.8px;">ОАО " Вымпелком-Р "</span>
<span class="c tx" style="left:1113px;width:231px;top:712.8px;">ОАО " Вымпелком-Р "</span>
<span class="c n" style="left:1345px;width:82px;top:712.8px;text-align:right;direction:rtl;"><bdi style="direction:ltr;unicode-bidi:isolate">1.00</bdi></span>
<span class="c n" style="left:1430px;width:49px;top:712.8px;text-align:right;direction:rtl;"><bdi style="direction:ltr;unicode-bidi:isolate">2</bdi></span>
<span class="c n" style="left:1534px;width:49px;top:712.8px;text-align:right;direction:rtl;"><bdi style="direction:ltr;unicode-bidi:isolate">3</bdi></span>
<span class="c n" style="left:1589px;width:126px;top:712.8px;">7718142364</span>
<span class="c tx" style="left:1719.5px;width:152.5px;top:712.8px;">Сбербанк России ОАО</span>
<span class="c n" style="left:94px;width:61px;top:750.8px;text-align:right;direction:rtl;"><bdi style="direction:ltr;unicode-bidi:isolate">0006</bdi></span>
<span class="c n" style="left:158px;width:115px;top:750.8px;text-align:right;direction:rtl;"><bdi style="direction:ltr;unicode-bidi:isolate">15.08.2005</bdi></span>
<span class="c n" style="left:279px;width:51px;top:750.8px;">0</span>
<span class="c tx" style="left:506.5px;width:602.5px;top:750.8px;">ООО "ПО Автоматика"</span>
<span class="c tx" style="left:1113px;width:231px;top:750.8px;">ООО "ПО Автоматика"</span>
<span class="c n" style="left:1345px;width:82px;top:750.8px;text-align:right;direction:rtl;"><bdi style="direction:ltr;unicode-bidi:isolate">24.78</bdi></span>
<span class="c n" style="left:1430px;width:49px;top:750.8px;text-align:right;direction:rtl;"><bdi style="direction:ltr;unicode-bidi:isolate">2</bdi></span>
<span class="c n" style="left:1482px;width:49px;top:750.8px;text-align:right;direction:rtl;"><bdi style="direction:ltr;unicode-bidi:isolate">2</bdi></span>
<span class="c n" style="left:1534px;width:49px;top:750.8px;text-align:right;direction:rtl;"><bdi style="direction:ltr;unicode-bidi:isolate">6</bdi></span>
<span class="c n" style="left:1589px;width:126px;top:750.8px;">6163055448</span>
<span class="c tx" style="left:1719.5px;width:152.5px;top:750.8px;">Ростовский РФ ОАО</span>
<span class="c n" style="left:94px;width:61px;top:788.8px;text-align:right;direction:rtl;"><bdi style="direction:ltr;unicode-bidi:isolate">0001</bdi></span>
<span class="c n" style="left:158px;width:115px;top:788.8px;text-align:right;direction:rtl;"><bdi style="direction:ltr;unicode-bidi:isolate">4.01.2006</bdi></span>
<span class="c n" style="left:279px;width:51px;top:788.8px;">0</span>
<span class="c tx" style="left:506.5px;width:602.5px;top:788.8px;">ООО  ПКФ "Сармат"8</span>
<span class="c tx" style="left:1113px;width:231px;top:788.8px;">ООО  ПКФ "Сармат"</span>
<span class="c n" style="left:1345px;width:82px;top:788.8px;text-align:right;direction:rtl;"><bdi style="direction:ltr;unicode-bidi:isolate">100.00</bdi></span>
<span class="c n" style="left:1430px;width:49px;top:788.8px;text-align:right;direction:rtl;"><bdi style="direction:ltr;unicode-bidi:isolate">2</bdi></span>
<span class="c n" style="left:1534px;width:49px;top:788.8px;text-align:right;direction:rtl;"><bdi style="direction:ltr;unicode-bidi:isolate">3</bdi></span>
<span class="c n" style="left:1589px;width:126px;top:788.8px;">6167012903</span>
<span class="c tx" style="left:1719.5px;width:152.5px;top:788.8px;">ОАО КБ "Центр-Инвест"</span>
<svg class="abs" style="left:58px;top:560px" width="34" height="36" viewBox="0 0 34 36"><path d="M2.500 2.100v31.700" stroke="#808080" stroke-width="2.600"/><path d="M5.300 2.100H17L15.500 18.900H5.300z" fill="#52b153"/><path d="M18.400 6.200H31.100L27.800 14.700 31.100 22.900H16.600z" fill="#52b153"/></svg>
<div class="abs" style="left:1873px;top:366px;width:16px;height:489px;background:#f0f0f0"></div>
<div class="abs" style="left:1874px;top:611px;width:14px;height:17px;background:#cdcdcd"></div>
<svg class="abs" style="left:1872px;top:366px" width="17" height="17" viewBox="0 0 17 17"><path d="M5 10.800l3.500-3.500L12 10.800" fill="none" stroke="#505050" stroke-width="1.800"/></svg>
<div class="abs" style="left:29px;top:855px;width:1860px;height:17px;background:#f0f0f0"></div>
<div class="abs" style="left:29px;top:855px;width:152px;height:17px;background:#c8c8c8"></div>
<div class="abs" style="left:31px;top:857px;width:15px;height:14px;background:#e6e6e6"></div>
<svg class="abs" style="left:31px;top:857px" width="15" height="14" viewBox="0 0 15 14"><path d="M3.400 3.500h2.300v7H3.400zM12 3.500v7L6.300 7z" fill="#111"/></svg>
<div class="abs" style="left:50px;top:857px;width:15px;height:14px;background:#e6e6e6"></div>
<svg class="abs" style="left:50px;top:857px" width="15" height="14" viewBox="0 0 15 14"><path d="M7.300 3.500v7L1.800 7zM13.300 3.500v7L7.800 7z" fill="#111"/></svg>
<div class="abs" style="left:69px;top:857px;width:15px;height:14px;background:#e6e6e6"></div>
<svg class="abs" style="left:69px;top:857px" width="15" height="14" viewBox="0 0 15 14"><path d="M10 3.500v7L4.300 7z" fill="#111"/></svg>
<div class="abs" style="left:88px;top:857px;width:15px;height:14px;background:#e6e6e6"></div>
<span class="t" style="left:92px;top:857.600px;font-size:10.500px;font-weight:bold;color:#111">?</span>
<div class="abs" style="left:107px;top:857px;width:15px;height:14px;background:#e6e6e6"></div>
<svg class="abs" style="left:107px;top:857px" width="15" height="14" viewBox="0 0 15 14"><path d="M5 3.500v7L10.700 7z" fill="#111"/></svg>
<div class="abs" style="left:126px;top:857px;width:15px;height:14px;background:#e6e6e6"></div>
<svg class="abs" style="left:126px;top:857px" width="15" height="14" viewBox="0 0 15 14"><path d="M1.700 3.500v7L7.200 7zM7.700 3.500v7L13.200 7z" fill="#111"/></svg>
<div class="abs" style="left:145px;top:857px;width:15px;height:14px;background:#e6e6e6"></div>
<svg class="abs" style="left:145px;top:857px" width="15" height="14" viewBox="0 0 15 14"><path d="M3 3.500v7L8.700 7zM9.300 3.500h2.300v7H9.300z" fill="#111"/></svg>
<div class="abs" style="left:198px;top:856px;width:17px;height:15px;background:#cdcdcd"></div>
<svg class="abs" style="left:181px;top:855px" width="17" height="17" viewBox="0 0 17 17"><path d="M10.300 5L6.500 8.500l3.800 3.500" fill="none" stroke="#505050" stroke-width="1.900"/></svg>
<svg class="abs" style="left:1855px;top:855px" width="17" height="17" viewBox="0 0 17 17"><path d="M6.700 5l3.800 3.500-3.800 3.500" fill="none" stroke="#505050" stroke-width="1.900"/></svg>
<svg class="abs" style="left:1872px;top:855px" width="17" height="17" viewBox="0 0 17 17"><path d="M5 6.800l3.500 3.500L12 6.800" fill="none" stroke="#505050" stroke-width="1.800"/></svg>
<div class="inp" style="left:28px;top:894px;width:821px;height:40px;background:#ecfbfd;border-color:#707070;box-shadow:inset 0 0 0 1px #fff"></div>
<span class="t big" style="left:36px;top:903px">ООО  ПКФ "Сармат"8</span>
<div class="inp" style="left:865px;top:894px;width:821px;height:40px;background:#ecfbfd;border-color:#707070;box-shadow:inset 0 0 0 1px #fff"></div>
<span class="t big" style="left:873px;top:903px;font-size:20.800px">Ростов н/Д 344064 г. Ростов н/Д, ул. Вавилова 59</span>
<div class="inp" style="left:1702px;top:894px;width:188px;height:40px;background:#fbebfc;border-color:#707070;box-shadow:inset 0 0 0 1px #fff"></div>
<span class="t n" style="left:1710px;top:903.100px;font-size:20.300px">6167012903</span>
<div class="abs" style="left:0;top:969px;width:1919px;height:6px;background:#b4c7ec"></div>
<div class="abs" style="left:0;top:975px;width:1919px;height:1px;background:#1c2438"></div>
<svg class="abs" style="left:0;top:969px" width="230" height="26" viewBox="0 0 230 26"><path d="M0 6.500h3.500L19 21.500h201l2.500-2.500V6.500" fill="#b4c7ec"/><path d="M0 6.500h3.500L19 21.500h201l2.500-2.500V6.500" fill="none" stroke="#1c2438" stroke-width="1.200"/><path d="M4 6h218" stroke="#b4c7ec" stroke-width="2"/><path d="M20 7h7.500l3 3v9.500H20z" fill="#fff" stroke="#808080" stroke-width="0.900"/><path d="M22 11h5M22 13.500h5M22 16h4" stroke="#b5b5b5" stroke-width="0.900"/><path d="M25.500 16.500l.8-2.500 5-5 1.400 1.400-5 5z" fill="#5b7fc7"/></svg>
<span class="t" style="left:36px;top:975.500px;font-size:12.300px;font-weight:bold;letter-spacing:-0.140px">Платёжные документы в банк</span>
<svg class="abs" style="left:1865px;top:980px" width="54" height="14" viewBox="0 0 54 14"><path d="M11 2.500L5 7l6 4.500z" fill="#808080" stroke="#111" stroke-width="1.100"/><path d="M26 2.500L32 7l-6 4.500z" fill="#808080" stroke="#111" stroke-width="1.100"/><path d="M41 3l7.500 8M48.500 3L41 11" stroke="#111" stroke-width="1.600"/></svg>
<div class="abs" style="left:0;top:999px;width:1919px;height:1px;background:#8c8c8c"></div>
<div class="abs" style="left:7px;top:1003px;width:1473px;height:6px;border:1px solid #a0a0a0;border-bottom:none;box-sizing:border-box;background:#f0f0f0"></div>
<div class="abs" style="left:1490px;top:1003px;width:83px;height:6px;border:1px solid #a0a0a0;border-bottom:none;box-sizing:border-box;background:#f0f0f0"></div>
<div class="abs" style="left:1581px;top:1003px;width:329px;height:6px;border:1px solid #a0a0a0;border-bottom:none;box-sizing:border-box;background:#f0f0f0"></div>
<div class="menu" style="left:294px;top:39px;width:283px;height:391px;z-index:10"><div class="abs" style="left:2px;top:191px;width:278px;height:25px;background:#91c9f7"></div><div class="chk" style="top:224px"></div><div class="chk" style="top:363px"></div><div class="msep" style="top:29.6px"></div><div class="msep" style="top:136.9px"></div><div class="msep" style="top:218.3px"></div><div class="msep" style="top:276.1px"></div><div class="msep" style="top:357.8px"></div><span class="mi" style="top:9.8px">По умолчанию</span><span class="mi dis" style="top:42.1px">Отменить</span><span class="sc" style="right:20px;top:42.1px">Ctrl+Z</span><span class="mi dis" style="top:66.6px">Вырезать</span><span class="sc" style="right:20px;top:66.6px">Shift+Del</span><span class="mi dis" style="top:91.6px">Копировать</span><span class="sc" style="right:20px;top:91.6px">Ctrl+Ins</span><span class="mi dis" style="top:116.4px">Вставить</span><span class="sc" style="right:20px;top:116.4px">Shift+Ins</span><span class="mi" style="top:149.4px">ПАНЕЛЬ КНОПОК</span><span class="mi" style="top:173.7px">ПАНЕЛЬ ЗАДАЧ</span><span class="mi" style="top:198.7px">МАСШТАБ</span><span class="mi" style="top:231.1px">Прокрутка</span><span class="mi" style="top:256.0px">Запрет повторов</span><span class="mi" style="top:288.3px">Заголовки</span><span class="mi" style="top:313.2px">Каскад</span><span class="mi" style="top:338.2px">Упорядочить</span><span class="mi" style="top:370.1px">1 Платёжные документы в банк</span><svg class="abs" style="left:267px;top:148.5px" width="6" height="10" viewBox="0 0 6 10"><path d="M1 0.500L5.500 5 1 9.500z" fill="#111"/></svg><svg class="abs" style="left:267px;top:173.5px" width="6" height="10" viewBox="0 0 6 10"><path d="M1 0.500L5.500 5 1 9.500z" fill="#111"/></svg><svg class="abs" style="left:267px;top:198.0px" width="6" height="10" viewBox="0 0 6 10"><path d="M1 0.500L5.500 5 1 9.500z" fill="#fff"/></svg><svg class="abs" style="left:7px;top:5.600px" width="14" height="18" viewBox="0 0 14 18"><path d="M8.700 0.300L2.500 8.700h3.700L4.200 16.400l7.300-9.500H7.600z" fill="#f0a848"/></svg><svg class="abs" style="left:5.300px;top:37.700px" width="18" height="15" viewBox="0 0 18 15"><path d="M2.500 11.500C6.500 5 10.500 2.500 13.800 4c2.600 1.300 2.700 5 1.200 8.500" fill="none" stroke="#8e8e8e" stroke-width="1.900"/><path d="M1.300 4.500v8h8" fill="none" stroke="#8e8e8e" stroke-width="1.900"/></svg><svg class="abs" style="left:7px;top:62.800px" width="15" height="18" viewBox="0 0 15 18"><g fill="none" stroke="#8e8e8e" stroke-width="1.500"><path d="M2.300 0.700l7.200 11.300M12.300 0.700L5.100 12"/><ellipse cx="3.900" cy="13.700" rx="2.200" ry="1.800"/><ellipse cx="10.700" cy="13.700" rx="2.200" ry="1.800"/></g></svg><svg class="abs" style="left:5.500px;top:87.500px" width="17" height="17" viewBox="0 0 17 17"><rect x="0.500" y="0.500" width="16" height="15.600" rx="3" fill="#a3a3a3"/><g fill="none" stroke="#f2f2f2" stroke-width="1.500"><path d="M7 6.300V3.700h6.300v6.300h-2.600"/><rect x="3.700" y="7" width="6" height="6"/></g></svg><svg class="abs" style="left:5.500px;top:112px" width="18" height="18" viewBox="0 0 18 18"><rect x="0.700" y="2.600" width="9.500" height="11.500" fill="#b5b5b5"/><path d="M3.300 3.600c0-2 1.200-3 2.700-3s2.700 1 2.700 3z" fill="#8e8e8e"/><path d="M7.400 6.200h5.400l3 3V16.300H7.400z" fill="#f2f2f2" stroke="#8e8e8e" stroke-width="1.300"/><path d="M9.300 10.500h4.600M9.300 12.500h4.600M9.300 14.300h4.600" stroke="#8e8e8e" stroke-width="0.900"/></svg><svg class="abs" style="left:7.300px;top:229.7px" width="14" height="12" viewBox="0 0 14 12"><path d="M2.300 6.200l3 3L11.300 2.600" fill="none" stroke="#253a55" stroke-width="1.600"/></svg><svg class="abs" style="left:7.300px;top:368.5px" width="14" height="12" viewBox="0 0 14 12"><path d="M2.300 6.200l3 3L11.300 2.600" fill="none" stroke="#253a55" stroke-width="1.600"/></svg></div>
<svg class="abs" style="left:555px;top:210px;z-index:11" width="170" height="280" viewBox="555 210 170 280"><rect x="562.500" y="218.100" width="150.900" height="262.100" fill="none" stroke="#ed1c24" stroke-width="4.900"/></svg>
<div class="menu" style="left:571px;top:228px;width:126px;height:230px;z-index:12"><div class="abs" style="left:2px;top:77px;width:120px;height:25px;background:#91c9f7"></div><span class="mi" style="left:0;width:107px;text-align:center;top:10.3px">70%</span><span class="mi" style="left:0;width:107px;text-align:center;top:35.3px">85%</span><span class="mi" style="left:0;width:107px;text-align:center;top:60.2px">90%</span><span class="mi" style="left:0;width:107px;text-align:center;top:85.2px">100%</span><span class="mi" style="left:0;width:107px;text-align:center;top:110.1px">110%</span><span class="mi" style="left:0;width:107px;text-align:center;top:135.0px">115%</span><span class="mi" style="left:0;width:107px;text-align:center;top:160.0px">130%</span><span class="mi" style="left:0;width:107px;text-align:center;top:184.9px">140%</span><span class="mi" style="left:0;width:107px;text-align:center;top:209.9px">150%</span><svg class="abs" style="left:6.500px;top:207px" width="14" height="15" viewBox="0 0 14 15"><path d="M0.500 0.300L13.500 7.500 0.500 14.700z" fill="#9670c0"/></svg></div>
<svg class="abs" style="left:715px;top:310px;z-index:13" width="505" height="160" viewBox="715 310 505 160"><path d="M734 390L967 327.500V358.800H1205.500V422.300H967V453z" fill="none" stroke="#ed1c24" stroke-width="4.800" stroke-linejoin="miter" stroke-miterlimit="10"/></svg>
</div>
</body></html>
